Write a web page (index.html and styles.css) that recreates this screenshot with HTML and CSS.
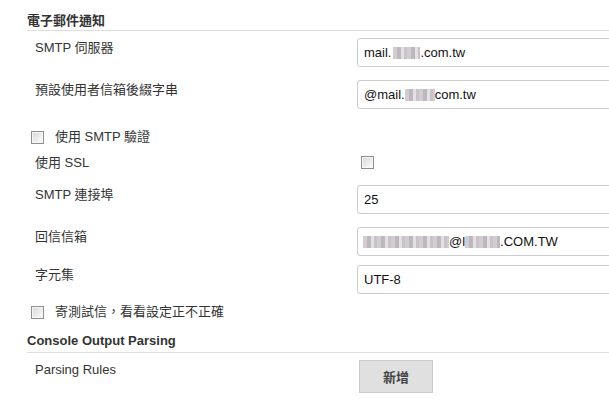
FILE: index.html
```html
<!DOCTYPE html>
<html lang="zh-Hant">
<head>
<meta charset="utf-8">
<title>電子郵件通知</title>
<link rel="stylesheet" href="styles.css">
</head>
<body>
<div class="page">
  <div class="section">
    <div class="section-title title-first">電子郵件通知</div>

    <div class="row row-first">
      <div class="label">SMTP 伺服器</div>
      <div class="field"><div class="textbox">mail.<span class="redact w27"></span>.com.tw</div></div>
    </div>

    <div class="row">
      <div class="label">預設使用者信箱後綴字串</div>
      <div class="field"><div class="textbox">@mail.<span class="redact w30"></span>com.tw</div></div>
    </div>

    <div class="check-row check-auth">
      <span class="checkbox"></span>
      <span class="check-label">使用 SMTP 驗證</span>
    </div>

    <div class="row row-ssl">
      <div class="label">使用 SSL</div>
      <div class="field"><span class="checkbox field-check"></span></div>
    </div>

    <div class="row row-port">
      <div class="label">SMTP 連接埠</div>
      <div class="field"><div class="textbox">25</div></div>
    </div>

    <div class="row">
      <div class="label">回信信箱</div>
      <div class="field"><div class="textbox textbox-tight"><span class="redact w86"></span>@l<span class="redact w35"></span>.COM.TW</div></div>
    </div>

    <div class="row row-charset">
      <div class="label">字元集</div>
      <div class="field"><div class="textbox">UTF-8</div></div>
    </div>

    <div class="check-row check-test">
      <span class="checkbox"></span>
      <span class="check-label">寄測試信，看看設定正不正確</span>
    </div>
  </div>

  <div class="section">
    <div class="section-title title-console">Console Output Parsing</div>
    <div class="row row-rules">
      <div class="label">Parsing Rules</div>
      <div class="field"><button class="btn" type="button">新增</button></div>
    </div>
  </div>
</div>
</body>
</html>
```

FILE: styles.css
```css
html, body {
  margin: 0;
  padding: 0;
  overflow: hidden;
  background: #ffffff;
}

body {
  font-family: "Liberation Sans", "Noto Sans CJK TC", Arial, sans-serif;
  font-size: 13px;
  line-height: 16px;
  color: #333333;
}

.page {
  width: 609px;
  height: 420px;
  overflow: hidden;
}

.section {
  padding-left: 27px;
  display: flex;
  flex-direction: column;
}

.section-title {
  font-weight: bold;
  color: #333333;
  border-bottom: 1px solid #dedede;
  width: 700px;
}

.title-first {
  padding-top: 13px;
  padding-bottom: 1px;
}

.title-console {
  margin-top: 13px;
  padding-bottom: 3px;
}

.row {
  display: grid;
  grid-template-columns: 330px 1fr;
  margin-top: 13px;
  width: 700px;
}

.row-first {
  margin-top: 7px;
}

.label {
  padding-left: 8px;
  padding-top: 2px;
  color: #333333;
}

.field {
  display: flex;
  align-items: flex-start;
}

.textbox {
  box-sizing: border-box;
  width: 280px;
  height: 29px;
  border: 1px solid #cccccc;
  border-radius: 3px;
  padding: 0 6px;
  display: flex;
  align-items: center;
  color: #111111;
  background: #ffffff;
  white-space: nowrap;
}

.redact {
  display: inline-block;
  height: 12px;
  background:
    repeating-linear-gradient(90deg,
      #d3cdd3 0 4px,
      #bdb7bf 4px 8px,
      #e4e0e4 8px 11px,
      #c8c2c9 11px 14px);
}

.w27 { width: 27px; margin-left: 2px; }
.w30 { width: 30px; }
.w86 { width: 86px; }
.w35 { width: 35px; }

.textbox-tight {
  padding-left: 5px;
}

.checkbox {
  box-sizing: border-box;
  display: inline-block;
  width: 13px;
  height: 13px;
  border: 1px solid #8f8f8f;
  background: linear-gradient(135deg, #d6d6d6 0%, #f2f2f2 70%, #fdfdfd 100%);
  box-shadow: inset 0 0 0 1px #f6f6f6;
  flex: none;
}

.check-row {
  display: flex;
  align-items: center;
  padding-left: 4px;
  height: 16px;
}

.check-label {
  margin-left: 11px;
}

.check-auth {
  margin-top: 20px;
}

.row-ssl {
  margin-top: 10px;
}

.row-ssl .label {
  padding-top: 0;
}

.field-check {
  margin-left: 4px;
  margin-top: 1px;
}

.row-port {
  margin-top: 14px;
}

.row-charset {
  margin-top: 9px;
}

.check-test {
  margin-top: 10px;
}

.row-rules {
  margin-top: 7px;
}

.btn {
  margin-left: 2px;
  width: 74px;
  height: 33px;
  background: #e0e0e0;
  border: 1px solid #cccccc;
  border-radius: 0;
  font-family: "Liberation Sans", "Noto Sans CJK TC", Arial, sans-serif;
  font-size: 13px;
  font-weight: bold;
  color: #444444;
  padding: 0;
}
```
